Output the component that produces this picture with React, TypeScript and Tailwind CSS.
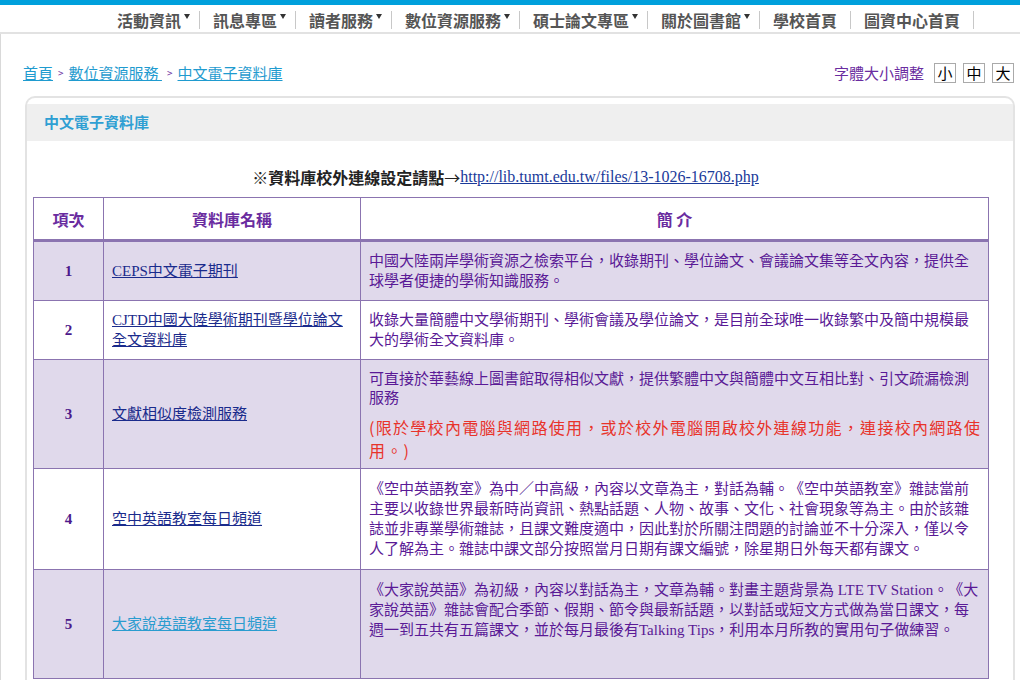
import React from 'react';

type Row = {
    no: number;
    name: string[];
    desc: string[];
    note?: string[];
    shaded: boolean;
    visited?: boolean;
    height: string;
    top?: boolean;
};

const navItems: { label: string; menu: boolean }[] = [
    { label: '活動資訊', menu: true },
    { label: '訊息專區', menu: true },
    { label: '讀者服務', menu: true },
    { label: '數位資源服務', menu: true },
    { label: '碩士論文專區', menu: true },
    { label: '關於圖書館', menu: true },
    { label: '學校首頁', menu: false },
    { label: '圖資中心首頁', menu: false },
];

const rows: Row[] = [
    {
        no: 1,
        name: ['CEPS中文電子期刊'],
        desc: [
            '中國大陸兩岸學術資源之檢索平台，收錄期刊、學位論文、會議論文集等全文內容，提供全',
            '球學者便捷的學術知識服務。',
        ],
        shaded: true,
        height: 'h-[59px]',
    },
    {
        no: 2,
        name: ['CJTD中國大陸學術期刊暨學位論文', '全文資料庫'],
        desc: [
            '收錄大量簡體中文學術期刊、學術會議及學位論文，是目前全球唯一收錄繁中及簡中規模最',
            '大的學術全文資料庫。',
        ],
        shaded: false,
        height: 'h-[59px]',
    },
    {
        no: 3,
        name: ['文獻相似度檢測服務'],
        desc: [
            '可直接於華藝線上圖書館取得相似文獻，提供繁體中文與簡體中文互相比對、引文疏漏檢測',
            '服務',
        ],
        note: ['(限於學校內電腦與網路使用，或於校外電腦開啟校外連線功能，連接校內網路使', '用。)'],
        shaded: true,
        height: 'h-[108px]',
    },
    {
        no: 4,
        name: ['空中英語教室每日頻道'],
        desc: [
            '《空中英語教室》為中／中高級，內容以文章為主，對話為輔。《空中英語教室》雜誌當前',
            '主要以收錄世界最新時尚資訊、熱點話題、人物、故事、文化、社會現象等為主。由於該雜',
            '誌並非專業學術雜誌，且課文難度適中，因此對於所關注問題的討論並不十分深入，僅以令',
            '人了解為主。雜誌中課文部分按照當月日期有課文編號，除星期日外每天都有課文。',
        ],
        shaded: false,
        height: 'h-[101px]',
    },
    {
        no: 5,
        name: ['大家說英語教室每日頻道'],
        desc: [
            '《大家說英語》為初級，內容以對話為主，文章為輔。對畫主題背景為 LTE TV Station。《大',
            '家說英語》雜誌會配合季節、假期、節令與最新話題，以對話或短文方式做為當日課文，每',
            '週一到五共有五篇課文，並於每月最後有Talking Tips，利用本月所教的實用句子做練習。',
        ],
        shaded: true,
        visited: true,
        height: 'h-[109px]',
        top: true,
    },
];

const MenuArrow = () => (
    <svg width="6" height="5" viewBox="0 0 6 5" className="ml-[3px] mb-[6px]">
        <polygon points="0,0 6,0 3,5" fill="#333" />
    </svg>
);

export default function App() {
    return (
        <div className="min-h-screen bg-white font-['Noto_Sans_CJK_TC',sans-serif] [text-spacing-trim:space-all]">
            <div className="h-[5px] bg-[#00a0dc]" />
            <nav className="h-[29px] bg-white border-b-2 border-[#e2e2e2] flex items-center justify-end pr-[46px] pt-[2px]">
                {navItems.map((item) => (
                    <React.Fragment key={item.label}>
                        <a
                            href="#"
                            className={`flex items-center pl-[13px] ${item.menu ? 'pr-[9px]' : 'pr-[13px]'} text-[16px] leading-[20px] font-bold text-[#555]`}
                        >
                            {item.label}
                            {item.menu && <MenuArrow />}
                        </a>
                        <span className="w-px h-[18px] bg-[#c8c8c8]" />
                    </React.Fragment>
                ))}
            </nav>

            <div className="border-l border-[#d9d9d9] pb-4">
                <div className="flex items-center justify-between pl-[22px] pr-[6px] h-[22px] pt-[28px] box-content">
                    <div className="flex items-center text-[15px] leading-[20px] text-[#1f9bcf]">
                        <a href="#" className="underline">首頁</a>
                        <span className="text-[10px] text-[#6a2ca0] mx-[5px]">&gt;</span>
                        <a href="#" className="underline">數位資源服務&nbsp;</a>
                        <span className="text-[10px] text-[#6a2ca0] mx-[5px]">&gt;</span>
                        <a href="#" className="underline">中文電子資料庫</a>
                    </div>
                    <div className="flex items-center text-[15px] leading-[20px]">
                        <span className="text-[#6a2ca0] mr-[3px]">字體大小調整</span>
                        {['小', '中', '大'].map((s) => (
                            <span
                                key={s}
                                className="ml-[7px] w-[22px] h-[20px] border border-[#aaa] flex items-center justify-center text-black text-[15px]"
                            >
                                {s}
                            </span>
                        ))}
                    </div>
                </div>

                <div className="mt-[12px] ml-[24px] w-[990px] border-2 border-b-0 border-[#e3e3e3] rounded-t-[10px] pt-[6px] pb-2">
                    <div className="h-[37px] bg-[#efefef] flex items-center pl-[17px] text-[15px] font-bold text-[#2f9fd3]">
                        中文電子資料庫
                    </div>

                    <div className="ml-[6px] w-[955px]">
                        <div className="pt-[25px] mb-[9px] h-[22px] box-content flex items-center justify-center pr-[10px]">
                            <span className="text-[16px] font-bold text-[#222]">※資料庫校外連線設定請點</span>
                            <span className="text-[16px] text-[#222]">→</span>
                            <a
                                href="#"
                                className="font-['Liberation_Serif',serif] text-[16px] text-[#1a3a9a] underline"
                            >
                                http://lib.tumt.edu.tw/files/13-1026-16708.php
                            </a>
                        </div>

                        <table className="table-fixed w-[955px] border-collapse border border-[#8b74b0]">
                            <colgroup>
                                <col className="w-[70px]" />
                                <col className="w-[257px]" />
                                <col className="w-[628px]" />
                            </colgroup>
                            <thead>
                                <tr className="h-[43px] border-b-[3px] border-[#8b74b0] text-[16px] font-bold text-[#6a2ca0]">
                                    <th className="border border-[#8b74b0] border-b-[3px] text-center font-bold">項次</th>
                                    <th className="border border-[#8b74b0] border-b-[3px] text-center font-bold">資料庫名稱</th>
                                    <th className="border border-[#8b74b0] border-b-[3px] text-center font-bold">簡 介</th>
                                </tr>
                            </thead>
                            <tbody>
                                {rows.map((r) => (
                                    <tr key={r.no} className={`${r.height} ${r.shaded ? 'bg-[#e0d9eb]' : 'bg-white'}`}>
                                        <td className="border border-[#8b74b0] text-center align-middle font-['Liberation_Serif',serif] font-bold text-[15px] text-[#4d1a8c]">
                                            {r.no}
                                        </td>
                                        <td className="border border-[#8b74b0] align-middle pl-[8px] pr-2">
                                            <a
                                                href="#"
                                                className={`font-['Liberation_Serif','Noto_Sans_CJK_TC',serif] text-[15px] leading-[20px] underline ${r.visited ? 'text-[#2a9ccf]' : 'text-[#1a2b8c]'}`}
                                            >
                                                {r.name.map((n, i) => (
                                                    <span key={i} className="block whitespace-nowrap">{n}</span>
                                                ))}
                                            </a>
                                        </td>
                                        <td
                                            className={`border border-[#8b74b0] px-[8px] ${r.top ? 'align-top pt-[10px]' : r.note ? 'align-top pt-[10px] pb-[6px]' : 'align-middle py-[9px]'}`}
                                        >
                                            <div
                                                className={`font-['Liberation_Serif','Noto_Sans_CJK_TC',serif] text-[15px] text-[#5a1a96] ${r.note ? 'leading-[19px]' : 'leading-[20px]'}`}
                                            >
                                                {r.desc.map((line, i) => (
                                                    <div key={i} className="whitespace-nowrap">{line}</div>
                                                ))}
                                            </div>
                                            {r.note && (
                                                <div className="mt-[8px] text-[16px] leading-[23px] tracking-[1.3px] text-[#e8332a]">
                                                    {r.note.map((line, i) => (
                                                        <div key={i} className="whitespace-nowrap">{line}</div>
                                                    ))}
                                                </div>
                                            )}
                                        </td>
                                    </tr>
                                ))}
                            </tbody>
                        </table>
                    </div>
                </div>
            </div>
        </div>
    );
}
